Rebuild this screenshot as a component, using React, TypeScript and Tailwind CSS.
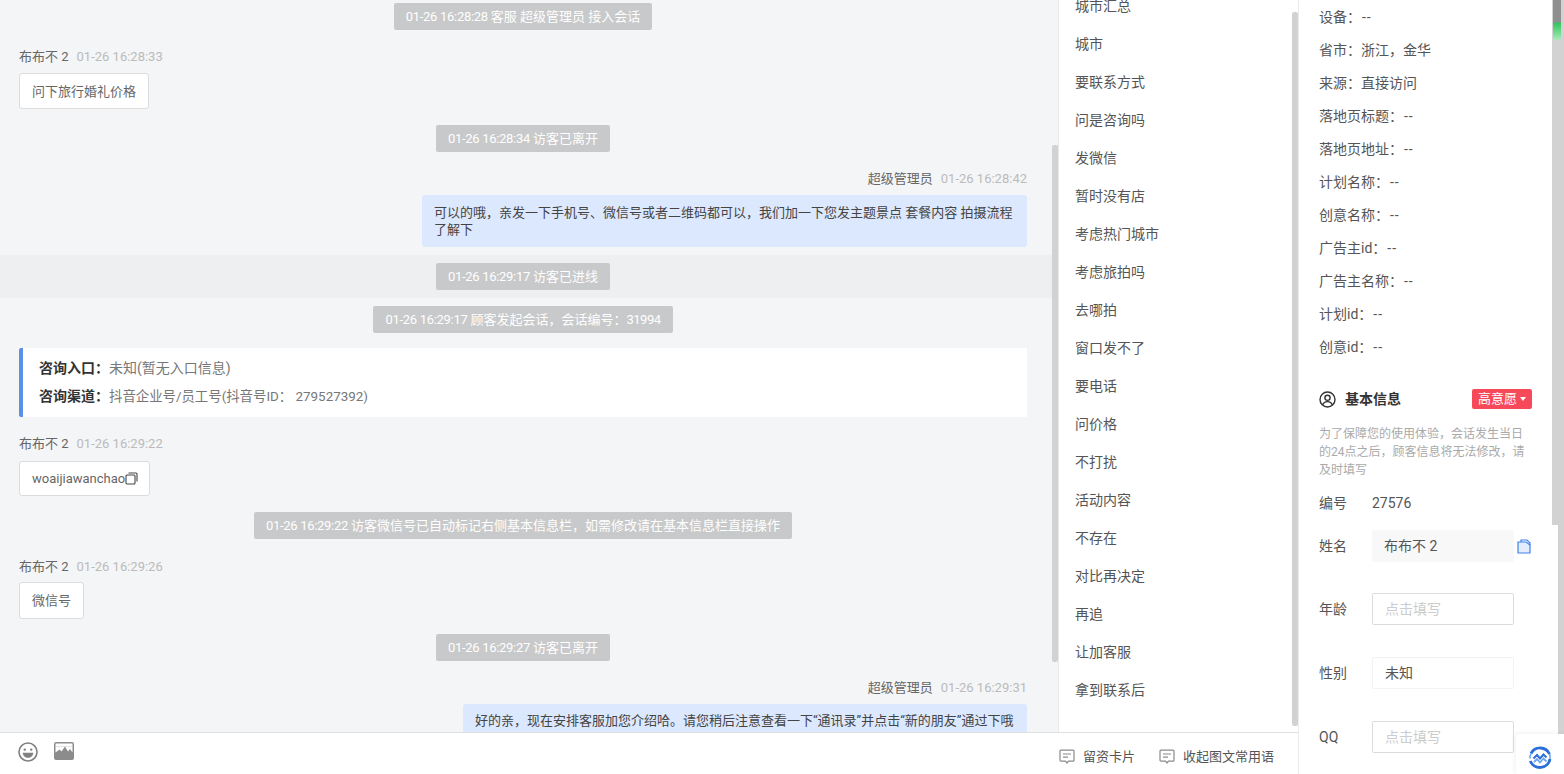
import React from "react";

function Chip({ time, text, nudge, className = "" }: { time: string; text: React.ReactNode; nudge?: boolean; className?: string }) {
  return (
    <div className={`flex justify-center ${className}`}>
      <div className={`h-[27px] px-3 flex items-center gap-[3px] rounded-[2px] bg-[#c8c9ca] text-[13px] text-white whitespace-nowrap ${nudge ? "pt-[1px]" : ""}`}>
        <span className="tracking-[-0.3px]">{time}</span>
        <span>{text}</span>
      </div>
    </div>
  );
}

function NameRow({ name, time, right, className = "" }: { name: string; time: string; right?: boolean; className?: string }) {
  return (
    <div className={`flex h-5 items-center gap-2 text-[13px] whitespace-nowrap ${right ? "justify-end" : ""} ${className}`}>
      <span className="text-[#666]">{name}</span>
      <span className="text-[#bbb]">{time}</span>
    </div>
  );
}

function Bubble({ children, className = "" }: { children: React.ReactNode; className?: string }) {
  return (
    <div className={`w-fit flex items-center pl-3 bg-white border border-[#dcdcdc] rounded-[3px] text-[13px] text-[#666] whitespace-nowrap ${className}`}>{children}</div>
  );
}

function Blue({ children, className = "" }: { children: React.ReactNode; className?: string }) {
  return (
    <div className={`self-end px-3 bg-[#dce8fd] rounded-[3px] text-[13px] leading-[17px] text-[#444] ${className}`}>{children}</div>
  );
}

const phrases = ["城市汇总", "城市", "要联系方式", "问是咨询吗", "发微信", "暂时没有店", "考虑热门城市", "考虑旅拍吗", "去哪拍", "窗口发不了", "要电话", "问价格", "不打扰", "活动内容", "不存在", "对比再决定", "再追", "让加客服", "拿到联系后"];

const details: [string, string][] = [
  ["设备：", "--"], ["省市：", "浙江，金华"], ["来源：", "直接访问"], ["落地页标题：", "--"], ["落地页地址：", "--"], ["计划名称：", "--"],
  ["创意名称：", "--"], ["广告主id：", "--"], ["广告主名称：", "--"], ["计划id：", "--"], ["创意id：", "--"],
];

function NoteIcon({ className = "" }: { className?: string }) {
  return (
    <svg width="16" height="15" viewBox="0 0 16 15" fill="none" stroke="#8a8a8a" strokeWidth="1.2" className={className}>
      <path d="M2 1.200h12a1 1 0 0 1 1 1v9a1 1 0 0 1-1 1H9.500L8 14l-1.500-1.800H2a1 1 0 0 1-1-1v-9a1 1 0 0 1 1-1z" />
      <path d="M4 5h8M4 8.200h5" />
    </svg>
  );
}

function FieldRow({ label, className = "", children }: { label: string; className?: string; children: React.ReactNode }) {
  return (
    <div className={`flex items-center h-8 ${className}`}>
      <span className="w-[53px] shrink-0 text-[14px] text-[#555]">{label}</span>
      {children}
    </div>
  );
}

export default function App() {
  return (
    <div className="relative w-[1564px] h-[774px] overflow-hidden flex bg-white font-['Roboto','Noto_Sans_CJK_SC',sans-serif]">
      <div className="w-[1298px] h-full flex flex-col">
        <div className="h-[732px] flex overflow-hidden">
          <div className="relative w-[1059px] bg-[#f4f5f7] border-r border-[#e6e7e9] overflow-hidden">
            <div className="flex flex-col pl-[19px] pr-[31px] pt-[3px]">
              <Chip nudge time="01-26 16:28:28" text="客服 超级管理员 接入会话" />
              <NameRow className="mt-[17px]" name="布布不 2" time="01-26 16:28:33" />
              <Bubble className="mt-[6px] h-[36px] pt-[2px] pr-3">问下旅行婚礼价格</Bubble>
              <Chip nudge className="mt-[16px]" time="01-26 16:28:34" text="访客已离开" />
              <NameRow right className="mt-[17px]" name="超级管理员" time="01-26 16:28:42" />
              <Blue className="mt-[6px] w-[605px] h-[52px] pt-[9px]">可以的哦，亲发一下手机号、微信号或者二维码都可以，我们加一下您发主题景点 套餐内容 拍摄流程了解下</Blue>
              <div className="-ml-[19px] -mr-[31px] mt-[8px] h-[43px] bg-[#eeeff1] flex items-center pl-[19px] pr-[31px]">
                <Chip className="w-full" time="01-26 16:29:17" text="访客已进线" />
              </div>
              <Chip className="mt-[8px]" time="01-26 16:29:17" text={<>顾客发起会话，会话编号：<span className="tracking-[-0.5px]">31994</span></>} />
              <div className="mt-[15px] h-[69px] pb-[1px] bg-white border-l-4 border-[#5b8fe8] rounded-l-[2px] pl-4 flex flex-col justify-center gap-[10px] text-[14px] leading-[18px]">
                <div><b className="font-bold text-[#333]">咨询入口：</b><span className="text-[#777]">未知(暂无入口信息)</span></div>
                <div><b className="font-bold text-[#333]">咨询渠道：</b><span className="text-[#777] text-[13.4px]">抖音企业号/员工号(抖音号ID： 279527392)</span></div>
              </div>
              <NameRow className="mt-[17px]" name="布布不 2" time="01-26 16:29:22" />
              <Bubble className="mt-[7px] h-[35px] pr-[11px]">
                woaijiawanchao
                <svg width="13" height="13" viewBox="0 0 13 13" fill="none" stroke="#444" strokeWidth="1.1">
                  <rect x="1" y="3" width="9" height="9" rx="1" />
                  <path d="M3.500 1h7.500a1 1 0 0 1 1 1v7.500" />
                </svg>
              </Bubble>
              <Chip className="mt-[16px]" time="01-26 16:29:22" text="访客微信号已自动标记右侧基本信息栏，如需修改请在基本信息栏直接操作" />
              <NameRow className="mt-[18px]" name="布布不 2" time="01-26 16:29:26" />
              <Bubble className="mt-[5px] h-[37px] pr-3">微信号</Bubble>
              <Chip className="mt-[15px]" time="01-26 16:29:27" text="访客已离开" />
              <NameRow right className="mt-[17px]" name="超级管理员" time="01-26 16:29:31" />
              <Blue className="mt-[6px] w-[564px] whitespace-nowrap h-[52px] pt-[8px]">好的亲，现在安排客服加您介绍哈。请您稍后注意查看一下“通讯录”并点击“新的朋友”通过下哦</Blue>
            </div>
            <div className="absolute left-[1052px] top-[145px] w-[6px] h-[517px] bg-[#d2d2d2] rounded-[2px]" />
          </div>
          <div className="relative w-[239px] bg-white overflow-hidden">
            <div className="-mt-[12.5px] pl-[16px] flex flex-col">
              {phrases.map((p) => (
                <div key={p} className="h-[38px] shrink-0 flex items-center text-[14px] text-[#555]">{p}</div>
              ))}
            </div>
            <div className="absolute left-[233px] top-[12px] w-[6px] h-[714px] bg-[#d2d2d2] rounded-[2px]" />
          </div>
        </div>
        <div className="h-[42px] border-t border-[#dfe0e2] bg-white flex items-start pl-[18px] pr-[24px]">
          <svg width="20" height="20" viewBox="0 0 20 20" fill="none" className="mt-[9px]">
            <circle cx="10" cy="10" r="9" stroke="#808080" strokeWidth="1.6" />
            <circle cx="6.800" cy="7.600" r="1.200" fill="#808080" />
            <circle cx="13.200" cy="7.600" r="1.200" fill="#808080" />
            <path d="M4.600 10.800h10.800c-.3 3-2.600 5-5.400 5s-5.100-2-5.400-5z" fill="#808080" />
          </svg>
          <svg width="20" height="18" viewBox="0 0 20 18" className="ml-[16px] mt-[9px]">
            <rect width="20" height="18" rx="2" fill="#8c8c8c" />
            <rect x="1.500" y="1.500" width="17" height="3" fill="#fff" />
            <path d="M1.500 4.500h17v6l-2.500-3.500-2 2.500-3-5-3.500 5-2-2-4 3z" fill="#fff" />
          </svg>
          <div className="ml-auto mt-[14px] flex items-center text-[13px] text-[#555]">
            <NoteIcon />
            <span className="ml-2">留资卡片</span>
            <NoteIcon className="ml-6" />
            <span className="ml-2">收起图文常用语</span>
          </div>
        </div>
      </div>
      <div className="relative w-[266px] h-full border-l border-[#ececec] overflow-hidden pl-[20px] pt-[1px]">
        {details.map(([k, v]) => (
          <div key={k} className="h-[33px] flex items-center text-[14px] text-[#555] whitespace-nowrap">
            <span>{k}</span><span className={v === "--" ? "tracking-[1px] pl-[1px]" : ""}>{v}</span>
          </div>
        ))}
        <div className="mt-[25px] w-[213px] h-5 flex items-center">
          <svg width="17" height="17" viewBox="0 0 17 17" fill="none" stroke="#333" strokeWidth="1.4">
            <circle cx="8.500" cy="8.500" r="7.500" />
            <circle cx="8.500" cy="6.800" r="2.600" />
            <path d="M3.600 14c.8-2.300 2.700-3.400 4.900-3.400s4.100 1.100 4.900 3.400" />
          </svg>
          <span className="ml-[9px] text-[14px] font-bold text-[#333]">基本信息</span>
          <div className="ml-auto w-[60px] h-5 bg-[#f64a5a] rounded-[2px] flex items-center justify-center text-[13px] text-white">
            高意愿
            <span className="ml-[3px] w-0 h-0 border-x-[3.5px] border-x-transparent border-t-[4px] border-t-white" />
          </div>
        </div>
        <p className="mt-[16px] w-[210px] text-[12px] leading-[18px] text-[#aaa]">为了保障您的使用体验，会话发生当日的24点之后，顾客信息将无法修改，请及时填写</p>
        <div className="mt-[14px] h-[20px] flex items-center text-[14px] text-[#555]">
          <span className="w-[53px]">编号</span><span>27576</span>
        </div>
        <FieldRow label="姓名" className="mt-[17px]">
          <div className="w-[142px] h-8 shrink-0 rounded-[3px] bg-[#f8f8f8] px-3 flex items-center text-[14px] text-[#555] whitespace-nowrap">布布不 2</div>
          <svg width="14" height="15" viewBox="0 0 14 15" fill="#e3edfc" stroke="#3f82ea" strokeWidth="1.200" className="ml-[3px] shrink-0">
            <path d="M1 3h8l4 3v8H1z" />
            <path d="M4 3V1h6l3 3v2" fill="none" />
          </svg>
        </FieldRow>
        <FieldRow label="年龄" className="mt-[31px]">
          <div className="w-[142px] h-8 shrink-0 rounded-[2px] border border-[#dcdcdc] px-3 flex items-center text-[14px] text-[#ccc]">点击填写</div>
        </FieldRow>
        <FieldRow label="性别" className="mt-[32px]">
          <div className="w-[142px] h-8 shrink-0 rounded-[2px] border border-[#f3f3f3] px-3 flex items-center text-[14px] text-[#555]">未知</div>
        </FieldRow>
        <FieldRow label="QQ" className="mt-[32px]">
          <div className="w-[142px] h-8 shrink-0 rounded-[2px] border border-[#dcdcdc] px-3 flex items-center text-[14px] text-[#ccc]">点击填写</div>
        </FieldRow>
        <div className="absolute left-[253px] top-0 w-[12px] h-[525px] bg-[#d2d2d2]" />
        <div className="absolute left-[259px] top-[525px] w-[6px] h-[209px] bg-[#d2d2d2]" />
        <div className="absolute left-[254px] top-0 w-[8px] h-[40px] rounded-b-[4px] bg-[linear-gradient(#8f8f8f_0,#8f8f8f_22px,#33c45f_23px,#a5ecb8_40px)]" />
      </div>
      <div className="absolute left-[1516px] top-[734px] w-[48px] h-[40px] bg-white rounded-tl-[4px] shadow-[0_0_6px_rgba(0,0,0,0.08)] flex items-start justify-center pt-[12px]">
        <svg width="24" height="24" viewBox="0 0 24 24" fill="none">
          <path d="M3 7.500A10.300 10.300 0 0 1 21.500 8" stroke="#2b6fd8" strokeWidth="2.800" />
          <path d="M22 13A10.300 10.300 0 0 1 2.300 15" stroke="#2b6fd8" strokeWidth="2.800" />
          <path d="M2 12.500A10 10 0 0 1 3 7.500M21.500 8A10 10 0 0 1 22 13" stroke="#6aa5f0" strokeWidth="1.600" />
          <path d="M5.500 12.500l3.500-3.500 3 3.500 3.500-4 3 3" stroke="#2b6fd8" strokeWidth="2" />
          <path d="M6 16l3-3 3 3.500 3.500-4 3 3" stroke="#6aa5f0" strokeWidth="1.800" />
        </svg>
      </div>
    </div>
  );
}
